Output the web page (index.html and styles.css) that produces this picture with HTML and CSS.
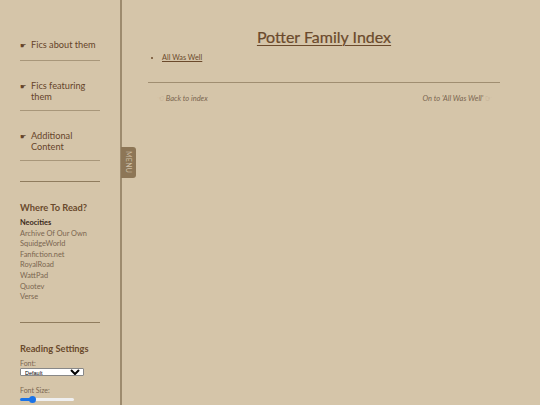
FILE: index.html
```html
<!DOCTYPE html>
<html lang="en">
<head>
    <meta charset="UTF-8">
    <meta name="viewport" content="width=device-width, initial-scale=1.0">
    <title>Potter Family Index</title>
    <link rel="stylesheet" href="styles.css">
</head>
<body>
    <div class="page">
        <aside class="sidebar">
            <ul class="side-nav">
                <li><span class="hand">☛</span><a href="#">Fics about them</a></li>
                <li><span class="hand">☛</span><a href="#">Fics featuring them</a></li>
                <li><span class="hand">☛</span><a href="#">Additional Content</a></li>
            </ul>
            <hr class="divider">

            <div class="where">
                <h3>Where To Read?</h3>
                <ul class="sites">
                    <li class="current">Neocities</li>
                    <li><a href="#">Archive Of Our Own</a></li>
                    <li><a href="#">SquidgeWorld</a></li>
                    <li><a href="#">Fanfiction.net</a></li>
                    <li><a href="#">RoyalRoad</a></li>
                    <li><a href="#">WattPad</a></li>
                    <li><a href="#">Quotev</a></li>
                    <li><a href="#">Verse</a></li>
                </ul>
            </div>
            <hr class="divider">

            <div class="settings">
                <h3>Reading Settings</h3>
                <label for="fontSelect">Font:</label>
                <select id="fontSelect">
                    <option>Default</option>
                    <option>Serif</option>
                    <option>Sans-serif</option>
                </select>
                <label for="fontSize" class="size-label">Font Size:</label>
                <input type="range" id="fontSize" min="10" max="30" value="14">
            </div>

            <button class="menu-tab">MENU</button>
        </aside>

        <main class="content">
            <h1><a href="#">Potter Family Index</a></h1>
            <ul class="fics">
                <li><a href="#">All Was Well</a></li>
            </ul>
            <hr class="rule">
            <div class="pager">
                <a href="#"><span class="hand">☜</span> Back to index</a>
                <a href="#">On to 'All Was Well' <span class="hand">☞</span></a>
            </div>
        </main>
    </div>
</body>
</html>
```

FILE: styles.css
```css
* {
    box-sizing: border-box;
}

body {
    margin: 0;
    background: #d5c5a9;
    color: #5e452c;
    font-family: Lato, 'Open Sans', sans-serif;
}

a {
    color: inherit;
    text-decoration: none;
}

.page {
    display: flex;
    height: 100vh;
    overflow: hidden;
}

/* sidebar */
.sidebar {
    position: relative;
    width: 122px;
    flex-shrink: 0;
    padding: 0 20px;
    border-right: 2px solid #9d8b6e;
}

.side-nav {
    list-style: none;
    margin: 0 0 20px;
    padding: 0;
}

.side-nav li {
    display: flex;
    gap: 5px;
    padding: 20px 0 8px;
    border-bottom: 1px solid #a8977a;
    font-size: 9.2px;
    line-height: 10.5px;
    color: #654429;
}

.side-nav li:first-child {
    padding-top: 40px;
    padding-bottom: 9px;
}

.side-nav .hand {
    font-size: 7px;
    line-height: 11px;
}

.divider {
    margin: 0;
    border: none;
    border-top: 1px solid #8f7c5e;
}

.where {
    padding: 20px 0 19px;
}

.sidebar h3 {
    margin: 0 0 4px;
    font-size: 9.3px;
    line-height: 12px;
    font-weight: 700;
    color: #6a4a2c;
}

.sites {
    list-style: none;
    margin: 0;
    padding: 0;
    font-size: 7.4px;
    line-height: 10.6px;
    color: #7b6550;
}

.sites .current {
    font-weight: 700;
    color: #3b2a1a;
}

.settings {
    padding-top: 20px;
    font-size: 7px;
    color: #7b6550;
}

.settings h3 {
    margin-bottom: 4px;
}

.settings label {
    display: block;
    line-height: 9px;
}

.settings select {
    display: block;
    width: 64px;
    height: 8px;
    margin: 0;
    padding: 0;
    font-size: 5.5px;
    font-family: 'Liberation Sans', sans-serif;
    border: 1px solid #888;
    border-radius: 1px;
    background: #fff;
}

.settings .size-label {
    margin-top: 10px;
}

/* small slider: blue up to the thumb, pale grey after */
.settings input[type=range] {
    -webkit-appearance: none;
    appearance: none;
    display: block;
    width: 54px;
    height: 3px;
    margin: 3px 0 0;
    border-radius: 2px;
    background: linear-gradient(to right, #1a73e8 0 20%, #efefef 20% 100%);
}

.settings input[type=range]::-webkit-slider-thumb {
    -webkit-appearance: none;
    width: 7px;
    height: 7px;
    border-radius: 50%;
    background: #1a73e8;
}

.menu-tab {
    position: absolute;
    top: 147px;
    right: -16px;
    width: 15px;
    height: 31px;
    padding: 0;
    border: none;
    border-radius: 0 3px 3px 0;
    background: #8d7656;
    color: #cdbfa6;
    font-family: Lato, sans-serif;
    font-size: 7px;
    letter-spacing: 0.3px;
    writing-mode: vertical-rl;
    cursor: pointer;
}

/* main column */
.content {
    flex: 1;
    padding: 26px 40px 0 26px;
}

.content h1 {
    margin: 0;
    text-align: center;
    font-size: 16px;
    font-weight: 400;
    line-height: 22px;
    color: #6b4a2c;
    -webkit-text-stroke: 0.2px #6b4a2c;
}

.content h1 a {
    text-decoration: underline;
    text-decoration-thickness: 1px;
    text-underline-offset: 2px;
}

.fics {
    margin: 5px 0 0;
    padding-left: 14px;
    font-size: 7.3px;
    line-height: 10px;
    color: #6b4a2c;
}

.fics a {
    text-decoration: underline;
}

.rule {
    margin: 19px 0 0;
    border: none;
    border-top: 1px solid #a08e71;
}

.pager {
    display: flex;
    justify-content: space-between;
    padding: 11px 8px 0 9px;
    font-size: 7.5px;
    font-style: italic;
    color: #7b6550;
}

.pager .hand {
    font-style: normal;
    color: #b6a386;
}
```
